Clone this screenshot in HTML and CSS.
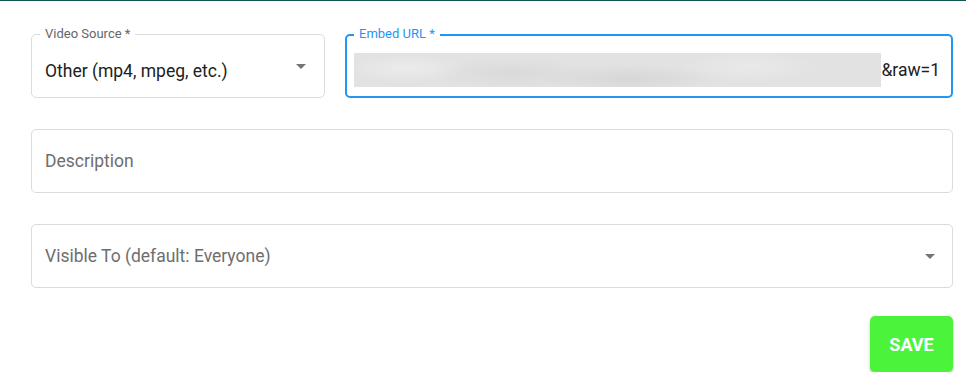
FILE: index.html
```html
<!DOCTYPE html>
<html>
<head>
<meta charset="utf-8">
<link rel="stylesheet" href="styles.css">
</head>
<body>
<div class="topline"></div>
<form class="form">
  <div class="row">
    <div class="field source">
      <span class="label">Video Source *</span>
      <div class="control">
        <span class="value">Other (mp4, mpeg, etc.)</span>
        <svg class="arrow" width="10" height="5" viewBox="0 0 10 5"><path d="M0 0h10L5 5z" fill="#757575"/></svg>
      </div>
    </div>
    <div class="field embed focused">
      <span class="label">Embed URL *</span>
      <div class="control">
        <div class="blur"></div>
        <span class="value">&amp;raw=1</span>
      </div>
    </div>
  </div>
  <div class="row">
    <div class="field wide">
      <div class="control plain">
        <span class="placeholder">Description</span>
      </div>
    </div>
  </div>
  <div class="row">
    <div class="field wide">
      <div class="control plain">
        <span class="placeholder">Visible To (default: Everyone)</span>
        <svg class="arrow" width="10" height="5" viewBox="0 0 10 5"><path d="M0 0h10L5 5z" fill="#757575"/></svg>
      </div>
    </div>
  </div>
  <div class="actions">
    <button type="button" class="save">SAVE</button>
  </div>
</form>
</body>
</html>
```
FILE: styles.css
```css
html, body {
  margin: 0;
  padding: 0;
  background: #fff;
  font-family: Roboto, "Liberation Sans", sans-serif;
}
.topline {
  height: 1px;
  background: #0e5450;
}
.form {
  padding: 33px 13px 0 31px;
  display: flex;
  flex-direction: column;
  gap: 31px;
}
.row {
  display: flex;
  gap: 20px;
}
.field {
  position: relative;
  box-sizing: border-box;
  height: 64px;
  border: 1px solid #dcdcdc;
  border-radius: 5px;
}
.source { width: 294px; }
.embed { flex: 1; }
.wide { flex: 1; }
.focused {
  border: 2px solid #2196f3;
}
.label {
  position: absolute;
  top: -9px;
  left: 8px;
  padding: 0 5px;
  background: #fff;
  font-size: 13px;
  line-height: 16px;
  color: #666;
}
.focused .label {
  left: 7px;
  top: -10px;
  color: #2196f3;
}
.control {
  height: 100%;
  display: flex;
  align-items: center;
  padding: 10px 18px 0 13px;
  box-sizing: border-box;
}
.focused .control {
  padding: 8px 11px 0 7px;
}
.control.plain {
  padding-top: 0;
  padding-right: 17px;
}
.value {
  flex: 1;
  font-size: 17.5px;
  color: #212121;
  white-space: nowrap;
}
.placeholder {
  flex: 1;
  font-size: 17.5px;
  color: #6e6e6e;
}
.arrow {
  flex: none;
  margin-top: -10px;
}
.plain .arrow { margin-top: 0; }
.blur {
  width: 527px;
  height: 34px;
  flex: none;
  background:
    radial-gradient(ellipse 60px 14px at 10% 45%, rgba(255,255,255,0.35), transparent),
    radial-gradient(ellipse 80px 16px at 30% 60%, rgba(0,0,0,0.04), transparent),
    radial-gradient(ellipse 90px 14px at 52% 75%, rgba(0,0,0,0.05), transparent),
    radial-gradient(ellipse 70px 16px at 75% 40%, rgba(255,255,255,0.25), transparent),
    #e2e2e2;
}
.embed .value {
  flex: 1;
  text-align: right;
}
.actions {
  display: flex;
  justify-content: flex-end;
  margin-top: -3px;
}
.save {
  width: 83px;
  height: 56px;
  border: none;
  border-radius: 5px;
  background: #4bf43b;
  color: #fff;
  font-family: Roboto, "Liberation Sans", sans-serif;
  font-weight: 700;
  font-size: 18px;
  box-shadow: 0 2px 3px rgba(0,0,0,0.25);
  cursor: pointer;
}
```
